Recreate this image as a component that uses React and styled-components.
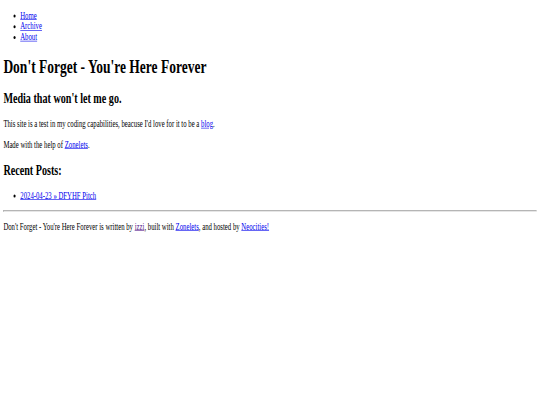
import React from "react";
import styled, { createGlobalStyle } from "styled-components";

const Global = createGlobalStyle`
  html, body { margin: 0; padding: 0; overflow: hidden; background: #fff; }
`;

const Frame = styled.div`
  width: 540px;
  height: 405px;
  overflow: hidden;
`;

const Stage = styled.div`
  width: 1280px;
  height: 675px;
  transform: scale(0.421875, 0.6);
  transform-origin: 0 0;
  box-sizing: border-box;
  padding: 1px 8px 8px;
  font-family: "Liberation Serif", "Times New Roman", serif;
  font-size: 16px;
  color: #000;
`;

const NavList = styled.ul`
  margin: 16px 0;
  padding-left: 40px;
  list-style: disc;
`;

const Link = styled.a`
  color: ${(p) => (p.$visited ? "#551a8b" : "#0000ee")};
  text-decoration: underline;
`;

const Title = styled.h1`
  font-size: 32px;
  margin: 21.44px 0;
  font-weight: bold;
`;

const Subtitle = styled.h2`
  font-size: 24px;
  margin: 19.92px 0;
  font-weight: bold;
`;

const Para = styled.p`
  margin: 16px 0;
`;

const Rule = styled.hr`
  margin: 8px 0;
  border-width: 1px;
  border-style: inset;
  border-color: #9a9a9a #eee #eee #9a9a9a;
  height: 0;
`;

export default function App() {
  return (
    <>
      <Global />
      <Frame>
        <Stage>
          <header>
            <nav>
              <NavList>
                <li><Link href="#">Home</Link></li>
                <li><Link href="#">Archive</Link></li>
                <li><Link href="#">About</Link></li>
              </NavList>
            </nav>
          </header>
          <main>
            <Title>Don't Forget - You're Here Forever</Title>
            <Subtitle>Media that won't let me go.</Subtitle>
            <Para>
              This site is a test in my coding capabilities, beacuse I'd love for it to be a{" "}
              <Link href="#">blog</Link>.
            </Para>
            <Para>
              Made with the help of <Link href="#">Zonelets</Link>.
            </Para>
            <Subtitle>Recent Posts:</Subtitle>
            <NavList>
              <li><Link href="#">2024-04-23 » DFYHF Pitch</Link></li>
            </NavList>
          </main>
          <footer>
            <Rule />
            <Para>
              Don't Forget - You're Here Forever is written by <Link href="#" $visited>izzi</Link>, built with{" "}
              <Link href="#">Zonelets</Link>, and hosted by <Link href="#">Neocities!</Link>
            </Para>
          </footer>
        </Stage>
      </Frame>
    </>
  );
}
